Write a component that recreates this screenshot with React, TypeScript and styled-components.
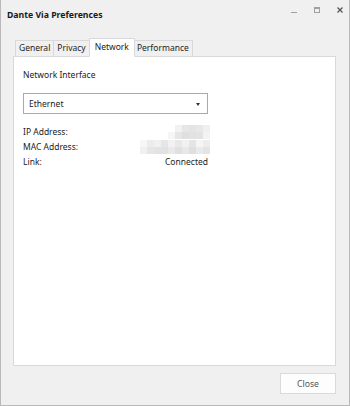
import React from "react";
import styled, { createGlobalStyle } from "styled-components";

const GlobalStyle = createGlobalStyle`
  html, body {
    margin: 0;
    padding: 0;
    background: #f0f0f0;
  }
  * {
    box-sizing: border-box;
  }
`;

const Window = styled.div`
  width: 350px;
  height: 406px;
  background: #f0f0f0;
  border: 1px solid #b9b9b9;
  border-top: none;
  display: flex;
  flex-direction: column;
  font-family: "Noto Sans", "Open Sans", sans-serif;
  font-size: 8.5px;
  color: #222;
`;

const TitleBar = styled.div`
  height: 30px;
  display: flex;
  align-items: flex-start;
  padding-left: 6px;
`;

const Title = styled.div`
  flex: 1;
  font-weight: bold;
  font-size: 8.7px;
  line-height: 30px;
  color: #1a1a1a;
`;

const WinButtons = styled.div`
  display: flex;
  align-items: center;
  height: 20px;
  margin-right: -2px;
`;

const WinButton = styled.div`
  width: 23px;
  height: 100%;
  display: flex;
  align-items: center;
  justify-content: center;
`;

const Body = styled.div`
  flex: 1;
  display: flex;
  flex-direction: column;
  padding: 8px 13px 0 12px;
`;

const TabStrip = styled.div`
  display: flex;
  align-items: flex-end;
  padding-left: 2px;
  height: 19px;
  position: relative;
  z-index: 1;
  margin-bottom: -1px;
`;

const Tab = styled.div<{ $active?: boolean }>`
  height: ${(p) => (p.$active ? "19px" : "17px")};
  padding: 0 ${(p) => (p.$active ? "5px" : "3px")};
  margin: ${(p) => (p.$active ? "0 -1px" : "0")};
  background: ${(p) => (p.$active ? "#ffffff" : "#f0f0f0")};
  border: 1px solid #d9d9d9;
  border-bottom: ${(p) => (p.$active ? "1px solid #ffffff" : "1px solid #d9d9d9")};
  margin-left: -1px;
  display: flex;
  align-items: center;
  line-height: 1;
  color: #222;
  position: relative;
  z-index: ${(p) => (p.$active ? 2 : 1)};
  &:first-child {
    margin-left: 0;
  }
`;

const Panel = styled.div`
  height: 310px;
  background: #ffffff;
  border: 1px solid #d9d9d9;
  padding: 10px 9px;
  display: flex;
  flex-direction: column;
`;

const Label = styled.div`
  line-height: 15px;
`;

const Select = styled.div`
  margin-top: 11px;
  width: 185px;
  height: 21px;
  border: 1px solid #7eb4ea;
  display: flex;
  align-items: center;
  justify-content: space-between;
  padding: 0 7px 0 5px;
`;

const Caret = styled.span`
  width: 0;
  height: 0;
  border-left: 2.5px solid transparent;
  border-right: 2.5px solid transparent;
  border-top: 3px solid #333;
  margin-top: 2px;
`;

const InfoGrid = styled.div`
  margin-top: 10px;
  width: 185px;
  display: grid;
  grid-template-columns: 1fr auto;
`;

const InfoKey = styled.div`
  line-height: 15px;
`;

const InfoValue = styled.div`
  line-height: 15px;
  display: flex;
  justify-content: flex-end;
  align-items: center;
`;

const Blur = styled.div`
  display: grid;
  grid-auto-flow: column;
  grid-template-rows: 7px 7px;
  margin-right: -2px;
`;

const Cell = styled.span`
  width: 7px;
  height: 7px;
`;

const Footer = styled.div`
  display: flex;
  justify-content: flex-end;
  padding: 7px 0 0;
`;

const Button = styled.button`
  width: 56px;
  height: 21px;
  background: #fdfdfd;
  border: 1px solid #dadada;
  font-family: inherit;
  font-size: 8.7px;
  color: #555;
  padding: 0;
`;

const ipShades = [
  ["#ffffff", "#f6f6f6"],
  ["#f2f2f2", "#e6e6e6"],
  ["#e6e6e6", "#dfdfdf"],
  ["#e4e4e4", "#e2e2e2"],
  ["#e8e8e8", "#e3e3e3"],
  ["#f0f0f0", "#f3f3f3"],
];

const macShades = [
  ["#f7f7f7", "#f0f0f0"],
  ["#ececec", "#e6e6e6"],
  ["#f0f0f0", "#e3e3e3"],
  ["#e6e6e6", "#e2e2e2"],
  ["#f2f2f2", "#e9e9e9"],
  ["#e8e8e8", "#e0e0e0"],
  ["#f1f1f1", "#e8e8e8"],
  ["#e5e5e5", "#dfdfdf"],
  ["#f5f5f5", "#eaeaea"],
  ["#ededed", "#e4e4e4"],
];

const Pixelated = ({ cols }: { cols: string[][] }) => (
  <Blur>
    {cols.flatMap((col, i) =>
      col.map((c, j) => <Cell key={`${i}-${j}`} style={{ background: c }} />)
    )}
  </Blur>
);

const App = () => {
  return (
    <>
      <GlobalStyle />
      <Window>
        <TitleBar>
          <Title>Dante Via Preferences</Title>
          <WinButtons>
            <WinButton>
              <svg width="8" height="8" viewBox="0 0 8 8">
                <line x1="1" y1="6.5" x2="7" y2="6.5" stroke="#a0a0a0" strokeWidth="1" />
              </svg>
            </WinButton>
            <WinButton>
              <svg width="8" height="8" viewBox="0 0 8 8">
                <rect x="1.5" y="1.5" width="5" height="5" fill="none" stroke="#a0a0a0" strokeWidth="1" />
                <line x1="1.5" y1="2.5" x2="6.5" y2="2.5" stroke="#a0a0a0" strokeWidth="1" />
              </svg>
            </WinButton>
            <WinButton>
              <svg width="8" height="8" viewBox="0 0 8 8">
                <path d="M1.5 1.5 L6.5 6.5 M6.5 1.5 L1.5 6.5" stroke="#555" strokeWidth="1.3" />
              </svg>
            </WinButton>
          </WinButtons>
        </TitleBar>
        <Body>
          <TabStrip>
            <Tab>General</Tab>
            <Tab>Privacy</Tab>
            <Tab $active>Network</Tab>
            <Tab>Performance</Tab>
          </TabStrip>
          <Panel>
            <Label>Network Interface</Label>
            <Select>
              <span>Ethernet</span>
              <Caret />
            </Select>
            <InfoGrid>
              <InfoKey>IP Address:</InfoKey>
              <InfoValue>
                <Pixelated cols={ipShades} />
              </InfoValue>
              <InfoKey>MAC Address:</InfoKey>
              <InfoValue>
                <Pixelated cols={macShades} />
              </InfoValue>
              <InfoKey>Link:</InfoKey>
              <InfoValue>Connected</InfoValue>
            </InfoGrid>
          </Panel>
          <Footer>
            <Button>Close</Button>
          </Footer>
        </Body>
      </Window>
    </>
  );
};

export default App;
